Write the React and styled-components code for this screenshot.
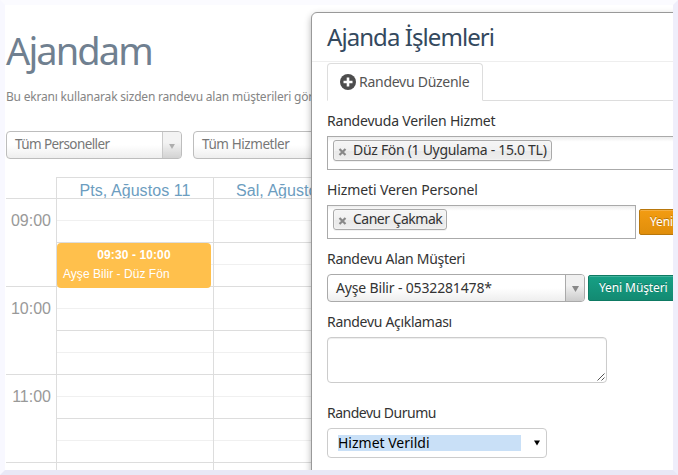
import React from "react";
import styled, { createGlobalStyle } from "styled-components";

const Global = createGlobalStyle`
  * { box-sizing: border-box; }
  body { margin: 0; background: #fff; }
  button { font: inherit; }
`;

const UI = `"Noto Sans", sans-serif`;

const Frame = styled.div`
  position: relative;
  width: 678px;
  height: 475px;
  overflow: hidden;
  border: 5px solid;
  border-color: #fbfbff #efeefb #e9e8f6 #f8f8ff;
  background: #fff;
  font-family: ${UI};
`;

const Agenda = styled.main`
  width: 800px;
  padding-left: 1px;
`;

const Heading = styled.h1`
  margin: 0;
  padding-top: 20px;
  height: 81px;
  font-size: 38px;
  line-height: 50px;
  font-weight: 400;
  letter-spacing: -1.9px;
  color: #708090;
  white-space: nowrap;
`;

const Lead = styled.p`
  margin: 0;
  height: 45px;
  font-size: 12px;
  line-height: 22px;
  letter-spacing: -0.2px;
  color: #858585;
  white-space: nowrap;
`;

const Filters = styled.div`
  display: flex;
  gap: 11px;
  height: 46px;
`;

const ComboBox = styled.div`
  display: flex;
  width: ${(p) => p.$width}px;
  height: 28px;
  border: 1px solid ${(p) => (p.$dim ? "#bdbdbd" : "#aaa")};
  border-radius: 4px;
  overflow: hidden;
  background: linear-gradient(#fff 50%, #eee);
`;

const ComboText = styled.span`
  flex: 1;
  padding-left: 8px;
  font-size: ${(p) => (p.$dim ? 13.5 : 14)}px;
  line-height: 25px;
  letter-spacing: ${(p) => p.$track || 0}px;
  color: ${(p) => (p.$dim ? "#777" : "#333")};
  white-space: nowrap;
`;

const ComboArrow = styled.span`
  display: flex;
  align-items: center;
  justify-content: center;
  width: 19px;
  padding-top: 2px;
  border-left: 1px solid ${(p) => (p.$dim ? "#bdbdbd" : "#aaa")};
  background: linear-gradient(#f0f0f0 40%, #ccc);
  opacity: ${(p) => (p.$dim ? 0.8 : 1)};
`;

const Calendar = styled.section`
  display: grid;
  grid-template-columns: 50px 157px 157px;
  grid-template-rows: 21px;
  font-family: "Liberation Sans", Arial, sans-serif;
`;

const DayHead = styled.div`
  height: 21px;
  padding-top: 4px;
  overflow: hidden;
  border-top: 1px solid #ddd;
  border-left: 1px solid #ddd;
  font-size: 16px;
  line-height: 18px;
  letter-spacing: 0.06px;
  text-align: center;
  color: #6c9dc0;
`;

const Hour = styled.div`
  height: 88px;
  padding: 12px 5px 0 0;
  border-top: 1px solid #ddd;
  font-size: 16px;
  line-height: 20px;
  text-align: right;
  color: #999;
`;

const HourCell = styled.div`
  position: relative;
  display: grid;
  grid-template-rows: repeat(4, 22px);
  height: 88px;
  border-left: 1px solid #ddd;
`;

const Slot = styled.div`
  border-top: 1px solid ${(p) => (p.$minor ? "#f0f0f0" : "#ddd")};
`;

const Event = styled.div`
  position: absolute;
  top: 45px;
  left: 0;
  width: 154px;
  height: 45px;
  padding: 3px 6px;
  z-index: 1;
  border-radius: 4px;
  background: #ffc04c;
  color: #fff;
  font-size: 12px;
  line-height: 20px;
  letter-spacing: 0.04px;
`;

const EventTime = styled.div`
  font-weight: 700;
  text-align: center;
  line-height: 18px;
  letter-spacing: 0.1px;
`;

const Dialog = styled.aside`
  position: absolute;
  top: 7px;
  left: 306px;
  width: 420px;
  height: 520px;
  border: 1px solid #999;
  border-radius: 6px;
  background: #fff;
  box-shadow: 0 3px 7px rgba(0, 0, 0, 0.3);
  z-index: 5;
`;

const DialogTitle = styled.h2`
  margin: 0;
  height: 49px;
  padding: 7px 0 0 15px;
  border-bottom: 1px solid #eee;
  font-size: 24px;
  line-height: 34px;
  font-weight: 400;
  letter-spacing: -0.93px;
  color: #34495e;
`;

const Tabs = styled.nav`
  display: flex;
  height: 39px;
  margin-left: 15px;
  padding-top: 1px;
  border-bottom: 1px solid #ddd;
`;

const Tab = styled.div`
  display: flex;
  align-items: center;
  gap: 3px;
  width: 156px;
  height: 38px;
  padding-left: 12px;
  border: 1px solid #ddd;
  border-bottom-color: #fff;
  border-radius: 4px 4px 0 0;
  background: #fff;
  font-size: 14px;
  letter-spacing: -0.27px;
  color: #555;
  white-space: nowrap;
  span { padding-bottom: 2px; }
`;

const Form = styled.form`
  display: flex;
  flex-direction: column;
  padding: 0 0 0 15px;
`;

const Label = styled.label`
  height: ${(p) => p.$height}px;
  padding-top: ${(p) => p.$top}px;
  font-size: 14px;
  line-height: 20px;
  letter-spacing: ${(p) => p.$track || 0}px;
  color: #333;
  white-space: nowrap;
`;

const Row = styled.div`
  display: flex;
  gap: 3px;
`;

const MultiSelect = styled.div`
  width: ${(p) => p.$width}px;
  flex: none;
  height: 34px;
  padding: 3px 5px;
  border: 1px solid #aaa;
  background: linear-gradient(#eee 1%, #fff 15%);
`;

const Chip = styled.span`
  display: flex;
  align-items: center;
  gap: 6px;
  width: ${(p) => p.$width}px;
  height: 21px;
  padding-left: 4px;
  border: 1px solid #aaa;
  border-radius: 3px;
  background: linear-gradient(#f4f4f4 20%, #f0f0f0 50%, #e8e8e8 52%, #eee);
  box-shadow: inset 0 0 2px #fff, 0 1px 0 rgba(0, 0, 0, 0.05);
  font-size: 14px;
  line-height: 18px;
  letter-spacing: ${(p) => p.$track || 0}px;
  color: #333;
  white-space: nowrap;
  svg { flex: none; margin-top: 3px; }
  span { margin-top: -2px; }
`;

const ActionButton = styled.button`
  flex: none;
  width: 104px;
  height: 26px;
  margin-top: ${(p) => p.$top}px;
  padding: 0 0 2px 10px;
  border: 1px solid ${(p) => p.$edge};
  border-radius: 2px;
  background: linear-gradient(${(p) => p.$from}, ${(p) => p.$to});
  box-shadow: inset 0 1px 0 rgba(255, 255, 255, 0.2);
  text-align: left;
  text-shadow: 0 -1px 0 rgba(0, 0, 0, 0.25);
  font-size: 12px;
  letter-spacing: -0.1px;
  color: #fff;
  white-space: nowrap;
`;

const Notes = styled.div`
  display: flex;
  align-items: flex-end;
  justify-content: flex-end;
  width: 280px;
  height: 46px;
  padding: 1px;
  border: 1px solid #ccc;
  border-radius: 4px;
  box-shadow: inset 0 1px 1px rgba(0, 0, 0, 0.075);
`;

const StatusSelect = styled.div`
  display: flex;
  align-items: center;
  gap: 13px;
  width: 220px;
  height: 30px;
  padding-left: 10px;
  border: 1px solid #ccc;
  border-radius: 4px;
`;

const StatusValue = styled.span`
  width: 183px;
  height: 16px;
  background: #c9e0f7;
  font-size: 14px;
  line-height: 16px;
  color: #000;
`;

const Caret = ({ color = "#888", w = 7, h = 6 }) => (
  <svg width={w} height={h} viewBox="0 0 7 6">
    <path d="M0 0H7L3.5 6Z" fill={color} />
  </svg>
);

const Remove = () => (
  <svg width="9" height="8" viewBox="0 0 9 8">
    <path d="M1.5 1L7.5 7M7.5 1L1.5 7" stroke="#888" strokeWidth="2.2" />
  </svg>
);

const PlusCircle = () => (
  <svg width="16" height="16" viewBox="0 0 16 16">
    <circle cx="8" cy="8" r="8" fill="#4d4d4d" />
    <path d="M8 3.5V12.5M3.5 8H12.5" stroke="#fff" strokeWidth="2.6" />
  </svg>
);

const Grip = () => (
  <svg width="8" height="8" viewBox="0 0 8 8">
    <path d="M0.5 7.5L7.5 0.5M4.5 7.5L7.5 4.5" stroke="#555" strokeWidth="1" />
  </svg>
);

const Combo = ({ width, dim, track, children }) => (
  <ComboBox $width={width} $dim={dim}>
    <ComboText $dim={dim} $track={track}>{children}</ComboText>
    <ComboArrow $dim={dim}><Caret color={dim ? "#999" : "#888"} w={dim ? 6 : 7} h={dim ? 5 : 6} /></ComboArrow>
  </ComboBox>
);

const hours = ["09:00", "10:00", "11:00", ""];

const DayHour = ({ children }) => (
  <HourCell>
    <Slot /><Slot $minor /><Slot /><Slot $minor />
    {children}
  </HourCell>
);

export default function App() {
  return (
    <Frame>
      <Global />
      <Agenda>
        <Heading>Ajandam</Heading>
        <Lead>Bu ekranı kullanarak sizden randevu alan müşterileri gör</Lead>
        <Filters>
          <Combo width={176} dim track={-0.6}>Tüm Personeller</Combo>
          <Combo width={176} dim track={-0.42}>Tüm Hizmetler</Combo>
        </Filters>
        <Calendar>
          <div />
          <DayHead>Pts, Ağustos 11</DayHead>
          <DayHead>Sal, Ağustos 12</DayHead>
          {hours.map((h, i) => (
            <React.Fragment key={i}>
              <Hour>{h}</Hour>
              <DayHour>
                {i === 0 && (
                  <Event>
                    <EventTime>09:30 - 10:00</EventTime>
                    Ayşe Bilir - Düz Fön
                  </Event>
                )}
              </DayHour>
              <DayHour />
            </React.Fragment>
          ))}
        </Calendar>
      </Agenda>
      <Dialog>
        <DialogTitle>Ajanda İşlemleri</DialogTitle>
        <Tabs>
          <Tab><PlusCircle /><span>Randevu Düzenle</span></Tab>
        </Tabs>
        <Form>
          <Label $height={35} $top={10} $track={-0.2}>Randevuda Verilen Hizmet</Label>
          <MultiSelect $width={380}>
            <Chip $width={219} $track={-0.3}><Remove /><span>Düz Fön (1 Uygulama - 15.0 TL)</span></Chip>
          </MultiSelect>
          <Label $height={35} $top={10} $track={-0.1}>Hizmeti Veren Personel</Label>
          <Row>
            <MultiSelect $width={309}>
              <Chip $width={114} $track={-0.5}><Remove /><span>Caner Çakmak</span></Chip>
            </MultiSelect>
            <ActionButton $top={4} $edge="#b8770c" $from="#f39c12" $to="#e08e0b">Yeni Personel</ActionButton>
          </Row>
          <Label $height={35} $top={10} $track={-0.29}>Randevu Alan Müşteri</Label>
          <Row>
            <Combo width={258} track={-0.16}>Ayşe Bilir - 0532281478*</Combo>
            <ActionButton $top={1} $edge="#0e7a63" $from="#16a085" $to="#138a72">Yeni Müşteri</ActionButton>
          </Row>
          <Label $height={35} $top={10} $track={-0.3}>Randevu Açıklaması</Label>
          <Notes><Grip /></Notes>
          <Label $height={45} $top={20} $track={-0.5}>Randevu Durumu</Label>
          <StatusSelect>
            <StatusValue>Hizmet Verildi</StatusValue>
            <Caret color="#000" w={6} />
          </StatusSelect>
        </Form>
      </Dialog>
    </Frame>
  );
}
